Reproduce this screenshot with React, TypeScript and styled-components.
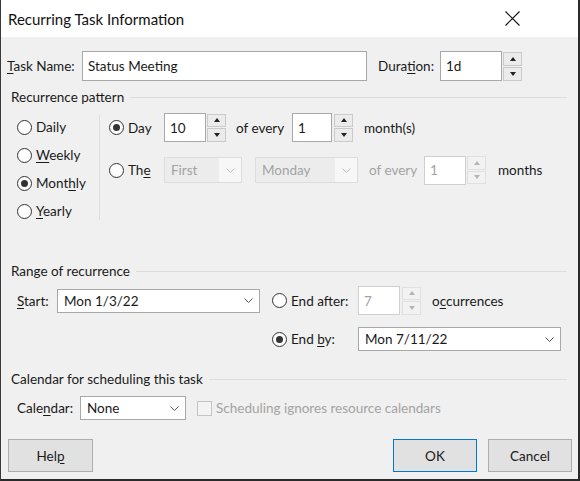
import React from 'react';
import styled, { createGlobalStyle } from 'styled-components';

const GlobalStyle = createGlobalStyle`
  html, body {
    margin: 0;
    padding: 0;
    background: #ffffff;
  }
  body {
    font-family: Lato, 'Noto Sans', sans-serif;
    font-size: 13.5px;
    color: #1a1a1a;
  }
`;

const Window = styled.div`
  width: 580px;
  height: 481px;
  box-sizing: border-box;
  display: flex;
  flex-direction: column;
  border-left: 1px solid #3a3a3a;
  border-right: 2px solid #2a2a2a;
  border-bottom: 2px solid #2a2a2a;
  background: #f0f0f0;
  overflow: hidden;
`;

const TitleBar = styled.div`
  height: 37px;
  flex: none;
  background: #ffffff;
  display: flex;
  align-items: center;
  justify-content: space-between;
  padding-left: 7px;
  font-size: 15px;
  color: #111;
`;

const CloseIcon = styled.svg`
  width: 15px;
  height: 15px;
  margin-right: 58px;
`;

const Body = styled.div`
  flex: 1;
  padding: 14px 6px 0 6px;
  display: flex;
  flex-direction: column;
`;

const Row = styled.div<{ $h: number; $mt?: number; $pl?: number }>`
  display: flex;
  align-items: center;
  height: ${p => p.$h}px;
  margin-top: ${p => p.$mt || 0}px;
  padding-left: ${p => p.$pl || 0}px;
`;

const Label = styled.span<{ $w?: number; $ml?: number; $disabled?: boolean }>`
  display: inline-block;
  width: ${p => (p.$w ? `${p.$w}px` : 'auto')};
  margin-left: ${p => p.$ml || 0}px;
  flex: none;
  white-space: nowrap;
  color: ${p => (p.$disabled ? '#a3a3a3' : '#1a1a1a')};
  u {
    text-decoration: underline;
    text-underline-offset: 2px;
  }
`;

const TextBox = styled.div<{ $w: number; $h: number; $disabled?: boolean }>`
  box-sizing: border-box;
  width: ${p => p.$w}px;
  height: ${p => p.$h}px;
  flex: none;
  background: #ffffff;
  border: 1px solid ${p => (p.$disabled ? '#cfcfcf' : '#a8a8a8')};
  padding: 0 5px;
  display: flex;
  align-items: center;
  color: ${p => (p.$disabled ? '#a3a3a3' : '#1a1a1a')};
`;

const SpinBox = styled.div<{ $h: number; $ml: number }>`
  display: flex;
  flex-direction: column;
  gap: 1px;
  width: 19px;
  height: ${p => p.$h}px;
  margin-left: ${p => p.$ml}px;
  flex: none;
`;

const SpinButton = styled.div<{ $disabled?: boolean }>`
  flex: 1;
  box-sizing: border-box;
  background: ${p => (p.$disabled ? '#f2f2f2' : '#ebebeb')};
  border: 1px solid ${p => (p.$disabled ? '#e0e0e0' : '#cacaca')};
  display: flex;
  align-items: center;
  justify-content: center;
`;

const Arrow = styled.span<{ $up?: boolean; $disabled?: boolean }>`
  width: 0;
  height: 0;
  border-left: 3px solid transparent;
  border-right: 3px solid transparent;
  ${p =>
    p.$up
      ? `border-bottom: 4px solid ${p.$disabled ? '#b5b5b5' : '#222'};`
      : `border-top: 4px solid ${p.$disabled ? '#b5b5b5' : '#222'};`}
`;

const Combo = styled.div<{ $w: number; $h: number; $disabled?: boolean; $ml?: number }>`
  box-sizing: border-box;
  width: ${p => p.$w}px;
  height: ${p => p.$h}px;
  margin-left: ${p => p.$ml || 0}px;
  flex: none;
  display: flex;
  align-items: center;
  background: ${p => (p.$disabled ? '#ececec' : '#ffffff')};
  border: 1px solid ${p => (p.$disabled ? '#dddddd' : '#a8a8a8')};
  color: ${p => (p.$disabled ? '#a3a3a3' : '#1a1a1a')};
`;

const ComboText = styled.span`
  flex: 1;
  padding-left: 6px;
  white-space: nowrap;
`;

const ComboArrow = styled.span<{ $disabled?: boolean }>`
  width: 22px;
  align-self: stretch;
  display: flex;
  align-items: center;
  justify-content: center;
  background: ${p => (p.$disabled ? '#f7f7f7' : 'transparent')};
`;

const GroupHeader = styled.div<{ $mt: number }>`
  display: flex;
  align-items: center;
  height: 16px;
  margin-top: ${p => p.$mt}px;
  padding-left: 4px;
  margin-right: 5px;
  white-space: nowrap;
  &::after {
    content: '';
    flex: 1;
    height: 1px;
    background: #dddddd;
    margin-left: 6px;
  }
`;

const RadioCircle = styled.span<{ $checked?: boolean }>`
  box-sizing: border-box;
  width: 15px;
  height: 15px;
  flex: none;
  border-radius: 50%;
  border: 1px solid #333;
  background: #fff;
  display: flex;
  align-items: center;
  justify-content: center;
  margin-right: 4px;
  &::after {
    content: '';
    width: 7px;
    height: 7px;
    border-radius: 50%;
    background: ${p => (p.$checked ? '#333' : 'transparent')};
  }
`;

const RadioItem = styled.label<{ $w?: number }>`
  display: flex;
  align-items: center;
  width: ${p => (p.$w ? `${p.$w}px` : 'auto')};
  flex: none;
  white-space: nowrap;
  u {
    text-underline-offset: 2px;
  }
`;

const PatternArea = styled.div`
  display: flex;
  margin-top: 8px;
  padding-left: 10px;
`;

const RadioColumn = styled.div`
  width: 82px;
  display: flex;
  flex-direction: column;
`;

const Separator = styled.div`
  width: 1px;
  height: 105px;
  margin-top: 2px;
  background: #dedede;
`;

const OptionColumn = styled.div`
  margin-left: 9px;
  display: flex;
  flex-direction: column;
  gap: 14px;
`;

const RangeArea = styled.div`
  display: flex;
  margin-top: 7px;
  padding-left: 10px;
`;

const RangeEnds = styled.div`
  display: flex;
  flex-direction: column;
  gap: 10px;
  margin-left: 12px;
`;

const CheckBox = styled.span`
  box-sizing: border-box;
  width: 15px;
  height: 15px;
  flex: none;
  border: 1px solid #c4c4c4;
  background: #f3f3f3;
  margin-left: 11px;
  margin-right: 4px;
`;

const ButtonBar = styled.div`
  display: flex;
  margin-top: 19px;
  padding-left: 1px;
`;

const Spacer = styled.div`
  flex: 1;
`;

const DialogButton = styled.div<{ $default?: boolean; $ml?: number; $w: number }>`
  box-sizing: border-box;
  width: ${p => p.$w}px;
  height: 33px;
  margin-left: ${p => p.$ml || 0}px;
  background: #e1e1e1;
  border: 1px solid ${p => (p.$default ? '#0078d7' : '#adadad')};
  display: flex;
  align-items: center;
  justify-content: center;
  color: #1a1a1a;
  u {
    text-underline-offset: 2px;
  }
`;

const Chevron = ({ disabled }: { disabled?: boolean }) => (
  <svg width="9" height="5" viewBox="0 0 9 5">
    <polyline
      points="0.5,0.5 4.5,4.5 8.5,0.5"
      fill="none"
      stroke={disabled ? '#c0c0c0' : '#555'}
      strokeWidth="1"
    />
  </svg>
);

const Spinner = ({ h, ml = 1, disabled }: { h: number; ml?: number; disabled?: boolean }) => (
  <SpinBox $h={h} $ml={ml}>
    <SpinButton $disabled={disabled}>
      <Arrow $up $disabled={disabled} />
    </SpinButton>
    <SpinButton $disabled={disabled}>
      <Arrow $disabled={disabled} />
    </SpinButton>
  </SpinBox>
);

const Select = (props: {
  w: number;
  h: number;
  value: string;
  disabled?: boolean;
  ml?: number;
}) => (
  <Combo $w={props.w} $h={props.h} $disabled={props.disabled} $ml={props.ml}>
    <ComboText>{props.value}</ComboText>
    <ComboArrow $disabled={props.disabled}>
      <Chevron disabled={props.disabled} />
    </ComboArrow>
  </Combo>
);

const Radio = (props: {
  checked?: boolean;
  w?: number;
  children: React.ReactNode;
}) => (
  <RadioItem $w={props.w}>
    <RadioCircle $checked={props.checked} />
    <span>{props.children}</span>
  </RadioItem>
);

export default function App() {
  return (
    <>
      <GlobalStyle />
      <Window>
        <TitleBar>
          <span>Recurring Task Information</span>
          <CloseIcon viewBox="0 0 15 15">
            <path d="M0.5 0.5 L14.5 14.5 M14.5 0.5 L0.5 14.5" stroke="#111" strokeWidth="1.1" />
          </CloseIcon>
        </TitleBar>
        <Body>
          <Row $h={30}>
            <Label $w={75}>
              <u>T</u>ask Name:
            </Label>
            <TextBox $w={285} $h={30}>
              Status Meeting
            </TextBox>
            <Label $w={62} $ml={11}>
              Dura<u>t</u>ion:
            </Label>
            <TextBox $w={62} $h={30}>
              1d
            </TextBox>
            <Spinner h={29} />
          </Row>

          <GroupHeader $mt={8}>Recurrence pattern</GroupHeader>
          <PatternArea>
            <RadioColumn>
              <Row $h={28}>
                <Radio>Daily</Radio>
              </Row>
              <Row $h={28}>
                <Radio>
                  <u>W</u>eekly
                </Radio>
              </Row>
              <Row $h={28}>
                <Radio checked>
                  Mont<u>h</u>ly
                </Radio>
              </Row>
              <Row $h={28}>
                <Radio>
                  <u>Y</u>early
                </Radio>
              </Row>
            </RadioColumn>
            <Separator />
            <OptionColumn>
              <Row $h={29}>
                <Radio checked w={55}>
                  Day
                </Radio>
                <TextBox $w={42} $h={29}>
                  10
                </TextBox>
                <Spinner h={28} ml={1} />
                <Label $w={56} $ml={10}>
                  of every
                </Label>
                <TextBox $w={40} $h={29}>
                  1
                </TextBox>
                <Spinner h={28} ml={2} />
                <Label $ml={11}>month(s)</Label>
              </Row>
              <Row $h={28}>
                <Radio w={55}>
                  Th<u>e</u>
                </Radio>
                <Select w={78} h={26} value="First" disabled />
                <Select w={103} h={26} value="Monday" disabled ml={13} />
                <Label $w={55} $ml={11} $disabled>
                  of every
                </Label>
                <TextBox $w={42} $h={29} $disabled>
                  1
                </TextBox>
                <Spinner h={28} disabled />
                <Label $ml={12}>months</Label>
              </Row>
            </OptionColumn>
          </PatternArea>

          <GroupHeader $mt={38}>Range of recurrence</GroupHeader>
          <RangeArea>
            <Row $h={29}>
              <Label $w={40}>
                <u>S</u>tart:
              </Label>
              <Select w={203} h={24} value="Mon 1/3/22" />
            </Row>
            <RangeEnds>
              <Row $h={29}>
                <Radio w={86}>End after:</Radio>
                <TextBox $w={42} $h={29} $disabled>
                  7
                </TextBox>
                <Spinner h={28} ml={2} disabled />
                <Label $ml={11}>
                  o<u>c</u>currences
                </Label>
              </Row>
              <Row $h={28}>
                <Radio checked w={86}>
                  End <u>b</u>y:
                </Radio>
                <Select w={203} h={24} value="Mon 7/11/22" />
              </Row>
            </RangeEnds>
          </RangeArea>

          <GroupHeader $mt={18}>Calendar for scheduling this task</GroupHeader>
          <Row $h={24} $mt={9} $pl={10}>
            <Label $w={63}>
              Cale<u>n</u>dar:
            </Label>
            <Select w={106} h={24} value="None" />
            <CheckBox />
            <Label $disabled>Scheduling ignores resource calendars</Label>
          </Row>

          <ButtonBar>
            <DialogButton $w={85}>
              Hel<u>p</u>
            </DialogButton>
            <Spacer />
            <DialogButton $w={84} $default>
              OK
            </DialogButton>
            <DialogButton $w={84} $ml={11}>
              Cancel
            </DialogButton>
          </ButtonBar>
        </Body>
      </Window>
    </>
  );
}
